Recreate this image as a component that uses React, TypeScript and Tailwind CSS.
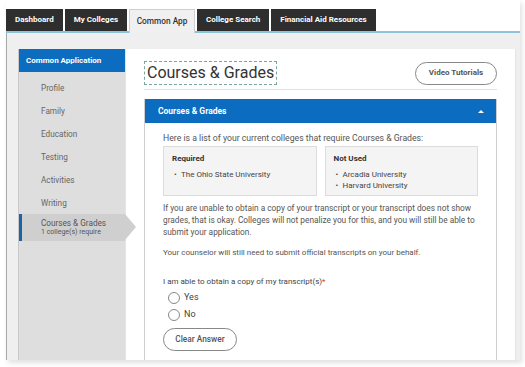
import React from "react";

const tabs = ["Dashboard", "My Colleges", "Common App", "College Search", "Financial Aid Resources"];
const side = ["Profile", "Family", "Education", "Testing", "Activities", "Writing"];

function Radio({ label }: { label: string }) {
  return (
    <div className="flex items-center h-[17px] pl-[5px]">
      <span className="w-[12px] h-[12px] rounded-full border border-[#888] bg-white" />
      <span className="ml-[4px] text-[9px] text-[#444]">{label}</span>
    </div>
  );
}

export default function App() {
  return (
    <div className="w-[525px] h-[367px] bg-white overflow-hidden" style={{ fontFamily: "Roboto, 'Liberation Sans', sans-serif" }}>
      <div className="ml-[6px] w-[514px] h-[360px] flex flex-col shadow-[2px_3px_5px_rgba(0,0,0,0.12)]">
        {/* Tabs */}
        <div className="h-[33px] pt-[8px] flex items-end gap-[2px] border-b-2 border-[#8cc4da] bg-white">
          {tabs.map((t) =>
            t === "Common App" ? (
              <div key={t} className="h-[24px] w-[66px] mb-[-2px] bg-[#f0f0f0] border border-b-0 border-[#cfcfcf] flex items-center justify-center text-[8.3px] font-medium text-[#333]">
                {t}
              </div>
            ) : (
              <div
                key={t}
                className="h-[22px] px-[9px] bg-[#2e2e2e] flex items-center text-[8px] font-bold text-white"
              >
                {t}
              </div>
            )
          )}
        </div>
        {/* Main */}
        <div className="flex-1 min-h-0 bg-[#efefef] border-l border-[#a8a8a8] pl-[11px] pr-[4px] pt-[16px] flex">
          {/* Sidebar */}
          <div className="w-[107px] border-l border-[#c8c8c8] bg-[#dedede] flex flex-col">
            <div className="h-[23px] bg-[#0c6cc0] flex items-center pl-[7px] text-[8px] font-bold text-white">
              Common Application
            </div>
            <div className="pt-[5px] flex flex-col">
              {side.map((s) => (
                <div key={s} className="h-[23px] flex items-center pl-[22px] text-[8.2px] text-[#666]">
                  {s}
                </div>
              ))}
              <div className="relative mt-[-1px] h-[27px] w-[106px] bg-[#cfcfcf] border-l-[3px] border-[#1a63a8] flex flex-col justify-center pl-[19px]">
                <span className="text-[8.2px] text-[#555] leading-[10px]">Courses &amp; Grades</span>
                <span className="text-[7px] text-[#555] leading-[9px]">1 college(s) require</span>
                <span className="absolute right-[-11px] top-0 w-0 h-0 border-y-[13.5px] border-y-transparent border-l-[11px] border-l-[#cfcfcf]" />
              </div>
            </div>
          </div>
          {/* Content card */}
          <div className="flex-1 bg-white border-l border-[#e4e4e4] border-r border-[#d4d4d4] pl-[18px] pr-[18px] pt-[12px] flex flex-col min-w-0">
            <div className="flex items-center justify-between h-[24px]">
              <div className="h-[24px] px-[2px] border border-dashed border-[#7aa6a0] flex items-center text-[16px] text-[#333]">
                Courses &amp; Grades
              </div>
              <div className="h-[23px] w-[82px] rounded-full border border-[#888] flex items-center justify-center text-[8px] font-bold text-[#555]">
                Video Tutorials
              </div>
            </div>
            <div className="mt-[4px] border-b border-[#e2e2e2]" />
            <div className="mt-[9px] flex-1 border-x border-[#cfcfcf] flex flex-col">
              <div className="h-[24px] bg-[#0c6cc0] flex items-center justify-between pl-[13px] pr-[12px]">
                <span className="text-[8.5px] font-bold text-white">Courses &amp; Grades</span>
                <span className="w-0 h-0 border-x-[3.5px] border-x-transparent border-b-[3.5px] border-b-white" />
              </div>
              <div className="px-[18px] pt-[9px] text-[8px] text-[#555]">
                <div className="leading-[12px] text-[8.7px]">Here is a list of your current colleges that require Courses &amp; Grades:</div>
                <div className="mt-[2px] flex gap-[8px]">
                  <div className="w-[154px] h-[50px] bg-[#f4f4f4] border border-[#dcdcdc] pl-[8px] pt-[6px]">
                    <div className="font-bold text-[#333] leading-[12px]">Required</div>
                    <ul className="mt-[4px] leading-[11px] text-[#444]">
                      <li className="flex"><span className="w-[9px] pl-[2px]">•</span>The Ohio State University</li>
                    </ul>
                  </div>
                  <div className="w-[154px] h-[50px] bg-[#f4f4f4] border border-[#dcdcdc] pl-[8px] pt-[6px]">
                    <div className="font-bold text-[#333] leading-[12px]">Not Used</div>
                    <ul className="mt-[4px] leading-[11px] text-[#444]">
                      <li className="flex"><span className="w-[9px] pl-[2px]">•</span>Arcadia University</li>
                      <li className="flex"><span className="w-[9px] pl-[2px]">•</span>Harvard University</li>
                    </ul>
                  </div>
                </div>
                <p className="mt-[6px] leading-[12px] text-[8.3px]">
                  If you are unable to obtain a copy of your transcript or your transcript does not show grades, that is okay. Colleges will not penalize you for this, and you will still be able to submit your application.
                </p>
                <p className="mt-[9px] leading-[12px]">Your counselor will still need to submit official transcripts on your behalf.</p>
                <p className="mt-[17px] leading-[12px] text-[#444]">
                  I am able to obtain a copy of my transcript(s)<span className="text-[#d33]">*</span>
                </p>
                <div className="mt-[1px] flex flex-col">
                  <Radio label="Yes" />
                  <Radio label="No" />
                </div>
                <div className="mt-[5px] h-[23px] w-[74px] rounded-full border border-[#888] flex items-center justify-center text-[8.3px] font-medium text-[#555]">
                  Clear Answer
                </div>
              </div>
            </div>
          </div>
        </div>
      </div>
    </div>
  );
}
